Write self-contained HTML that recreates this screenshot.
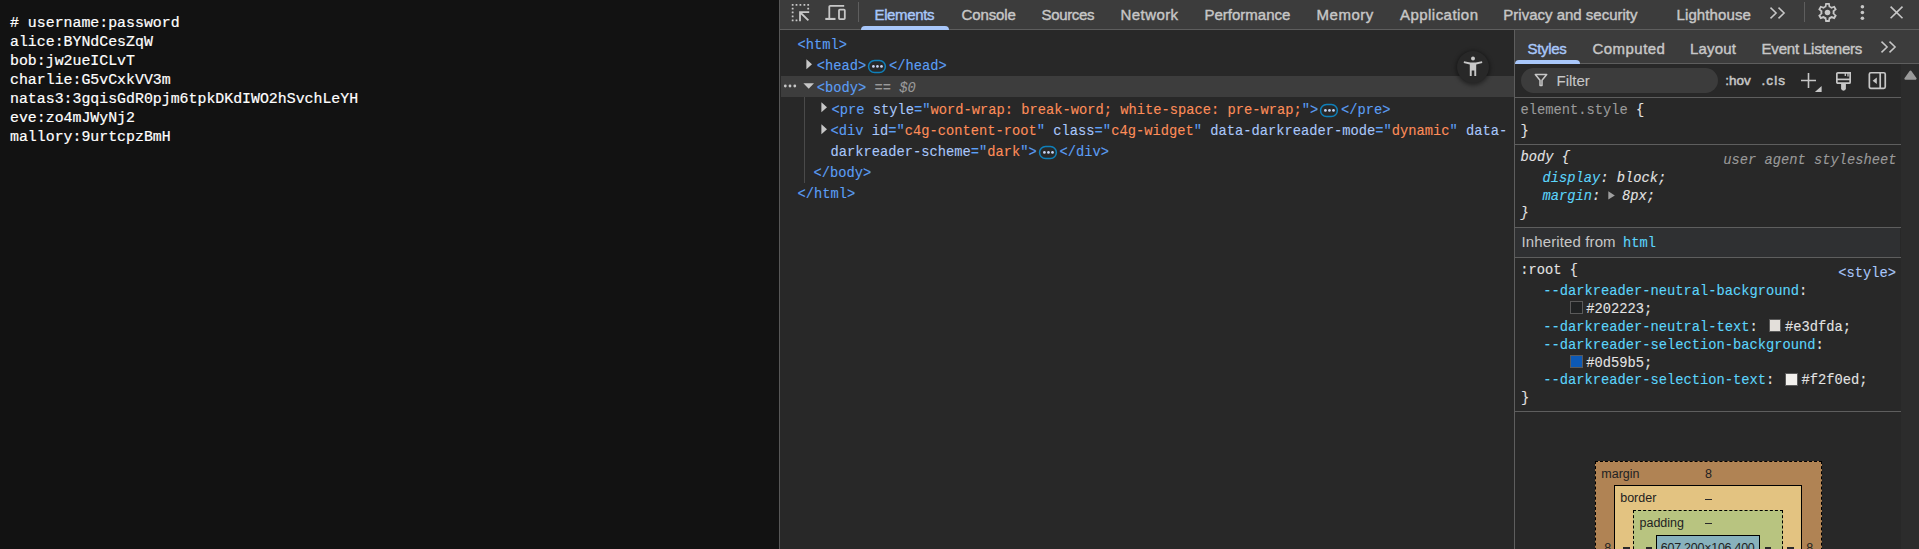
<!DOCTYPE html>
<html>
<head>
<meta charset="utf-8">
<title>users.txt</title>
<style>
html,body{margin:0;padding:0;}
body{width:1919px;height:549px;overflow:hidden;position:relative;background:#282828;font-family:"Liberation Sans",sans-serif;}
.abs{position:absolute;}
.t{position:absolute;white-space:pre;line-height:1;}
.mono{font-family:"Liberation Mono",monospace;}
/* left page */
#page{left:0;top:0;width:779px;height:549px;background:#121212;}
#page pre{position:absolute;left:10px;top:14px;-webkit-text-stroke:0.2px;margin:0;font-family:"Liberation Mono",monospace;font-size:14.896px;line-height:19px;color:#fff;white-space:pre;}
#split{left:779px;top:0;width:1px;height:549px;background:#575757;}
/* devtools */
#tb{left:780px;top:0;width:1139px;height:29px;background:#3c3c3c;}
#tbline{left:780px;top:29px;width:1139px;height:1px;background:#5e5e5e;}
.tab{position:absolute;top:5.5px;-webkit-text-stroke:0.4px;font-size:15px;line-height:17px;color:#c7c7c7;white-space:pre;}
.tab.sel{color:#a8c7fa;}
/* elements */
.dt{-webkit-text-stroke:0.1px;font-family:"Liberation Mono",monospace;font-size:13.75px;line-height:21.25px;white-space:pre;position:absolute;}
.tg{color:#5c9ff5;}.an{color:#a8c7fa;}.av{color:#fe8d59;}.gr{color:#9a9a9a;}
.cy{color:#5cd5fb;}.wh{color:#e3e3e3;}
.st{-webkit-text-stroke:0.1px;font-family:"Liberation Mono",monospace;font-size:13.75px;line-height:18px;white-space:pre;position:absolute;}
.hl{position:absolute;left:1515px;width:386px;height:1px;background:#5e5e5e;}

.pill{width:18.3px;height:13.4px;border:1.3px solid #0f7db5;border-radius:7px;box-sizing:border-box;}
.pill::after{content:"";position:absolute;left:3px;top:4.1px;width:2.6px;height:2.6px;border-radius:50%;background:#c3d3f3;box-shadow:4.05px 0 0 #c3d3f3,8.1px 0 0 #c3d3f3;}

.sw{width:12.6px;height:12.6px;box-sizing:border-box;border:1px solid #5a5a5a;}

.bm{position:absolute;font-size:12.5px;line-height:16px;color:#222;white-space:pre;}
.ds{position:absolute;width:6.500px;height:1.200px;background:#2a2a2a;}
</style>
</head>
<body>
<div id="page" class="abs"><pre># username:password
alice:BYNdCesZqW
bob:jw2ueICLvT
charlie:G5vCxkVV3m
natas3:3gqisGdR0pjm6tpkDKdIWO2hSvchLeYH
eve:zo4mJWyNj2
mallory:9urtcpzBmH</pre></div>
<div id="split" class="abs"></div>
<div id="tb" class="abs"></div>
<div id="tbline" class="abs"></div>

<!-- TOOLBAR -->
<svg class="abs" style="left:790px;top:2px" width="22" height="22" viewBox="0 0 22 22">
 <g fill="#c7c7c7"><rect x="1.75" y="1.95" width="1.8" height="1.8" rx="0.3"/><rect x="5.60" y="1.95" width="1.8" height="1.8" rx="0.3"/><rect x="9.50" y="1.95" width="1.8" height="1.8" rx="0.3"/><rect x="13.50" y="1.95" width="1.8" height="1.8" rx="0.3"/><rect x="17.30" y="1.95" width="1.8" height="1.8" rx="0.3"/><rect x="1.75" y="5.70" width="1.8" height="1.8" rx="0.3"/><rect x="1.75" y="9.50" width="1.8" height="1.8" rx="0.3"/><rect x="1.75" y="13.50" width="1.8" height="1.8" rx="0.3"/><rect x="1.75" y="17.40" width="1.8" height="1.8" rx="0.3"/><rect x="17.30" y="5.70" width="1.8" height="1.8" rx="0.3"/><rect x="5.60" y="17.40" width="1.8" height="1.8" rx="0.3"/></g>
 <path d="M10 19.200V10.200H19.200M10.300 10.500L18.400 18.300" fill="none" stroke="#c7c7c7" stroke-width="1.800"/>
</svg>
<svg class="abs" style="left:824px;top:3px" width="24" height="20" viewBox="0 0 24 20" fill="none" stroke="#c7c7c7" stroke-width="1.800">
 <path d="M5.300 14.900V3.900a1 1 0 0 1 1-1H20.200"/>
 <path d="M1.300 15.950H11.500" stroke-width="2.100"/>
 <rect x="15" y="6.600" width="5.800" height="9.500" rx="0.800"/>
</svg>
<div class="abs" style="left:858px;top:2px;width:1px;height:20px;background:#5e5e5e"></div>
<div class="abs" style="left:861px;top:26px;width:88px;height:4px;background:#a8c7fa;border-radius:4px 4px 0 0"></div>
<div class="tab sel" id="t1" style="letter-spacing:-0.36px;left:874.5px">Elements</div>
<div class="tab" id="t2" style="letter-spacing:-0.13px;left:961.5px">Console</div>
<div class="tab" id="t3" style="letter-spacing:-0.33px;left:1041.5px">Sources</div>
<div class="tab" id="t4" style="letter-spacing:0.43px;left:1120.5px">Network</div>
<div class="tab" id="t5" style="left:1204.5px">Performance</div>
<div class="tab" id="t6" style="letter-spacing:0.54px;left:1316.5px">Memory</div>
<div class="tab" id="t7" style="letter-spacing:0.46px;left:1400px">Application</div>
<div class="tab" id="t8" style="left:1503.3px">Privacy and security</div>
<div class="tab" id="t9" style="letter-spacing:0.11px;left:1676.5px">Lighthouse</div>
<svg class="abs" style="left:1768px;top:4.500px" width="20" height="16" viewBox="0 0 20 16" fill="none" stroke="#c7c7c7" stroke-width="1.5">
 <path d="M2.5 2.6l5.6 5.4l-5.6 5.4M10.5 2.6l5.6 5.4l-5.6 5.4"/>
</svg>
<div class="abs" style="left:1804px;top:2px;width:1px;height:20px;background:#5e5e5e"></div>
<svg class="abs" style="left:1816px;top:1px" width="23" height="23" viewBox="0 0 24 24" fill="#c7c7c7">
 <path fill-rule="evenodd" d="M9.7 2h4.6l.5 3.1c.6.25 1.15.57 1.65.96l2.95-1.12 2.3 3.98-2.45 1.98c.05.36.08.73.08 1.1s-.03.74-.08 1.1l2.45 1.98-2.3 3.98-2.95-1.12c-.5.39-1.05.71-1.65.96L14.300 22H9.700l-.5-3.100c-.6-.25-1.150-.570-1.650-.960l-2.950 1.120-2.300-3.980 2.450-1.980c-.050-.360-.080-.730-.080-1.100s.030-.740.080-1.100L2.300 8.920l2.300-3.980 2.950 1.120c.5-.39 1.050-.71 1.650-.96zM11.200 3.800l-.42 2.650-.5.180c-.7.260-1.330.63-1.890 1.100l-.4.340-2.520-.96-.8 1.390 2.090 1.690-.09.520c-.12.700-.12 1.500 0 2.200l.09.520-2.090 1.690.8 1.390 2.520-.96.400.340c.560.470 1.190.840 1.890 1.100l.5.180.42 2.650h1.600l.42-2.650.5-.18c.7-.26 1.330-.63 1.890-1.100l.4-.34 2.520.96.800-1.390-2.090-1.690.09-.52c.120-.7.120-1.500 0-2.200l-.09-.52 2.090-1.690-.8-1.390-2.520.96-.4-.34c-.56-.47-1.190-.84-1.890-1.100l-.5-.18-.42-2.650z"/>
 <circle cx="12" cy="12" r="2.9"/>
</svg>
<svg class="abs" style="left:1858px;top:3px" width="9" height="19" viewBox="0 0 9 19" fill="#c7c7c7">
 <circle cx="4.400" cy="3.700" r="1.800"/><circle cx="4.400" cy="9.450" r="1.800"/><circle cx="4.400" cy="15.200" r="1.800"/>
</svg>
<svg class="abs" style="left:1888px;top:4px" width="17" height="17" viewBox="0 0 17 17" fill="none" stroke="#c7c7c7" stroke-width="1.6">
 <path d="M2.600 2.600l11.900 11.700M14.500 2.600l-11.900 11.700"/>
</svg>

<!-- ELEMENTS -->
<div class="abs" style="left:781px;top:76px;width:733px;height:21px;background:#3d3d3d"></div>
<div class="abs" style="left:804px;top:97px;width:1px;height:86px;background:#4a4a4a"></div>
<div class="dt" style="left:797.5px;top:34.65px"><span class="tg">&lt;html&gt;</span></div>
<svg class="abs" style="left:805.5px;top:58.9px" width="7" height="11" viewBox="0 0 7 11"><path d="M0.400 0.200L6 5.200L0.400 10.200z" fill="#c7c7c7"/></svg>
<div class="dt" style="left:816.8px;top:55.65px"><span class="tg">&lt;head&gt;</span></div>
<svg class="abs" style="left:867px;top:59px" width="20" height="15" viewBox="0 0 20 15"><rect x="1.550" y="1.450" width="16.800" height="12" rx="6" fill="none" stroke="#0f80ba" stroke-width="1.500"/><g fill="#c5d5f5"><circle cx="6.400" cy="7.450" r="1.350"/><circle cx="10.450" cy="7.450" r="1.350"/><circle cx="14.500" cy="7.450" r="1.350"/></g></svg>
<div class="dt" style="left:889px;top:55.65px"><span class="tg">&lt;/head&gt;</span></div>
<svg class="abs" style="left:783px;top:83px" width="14" height="6" viewBox="0 0 14 6" fill="#c7c7c7"><circle cx="2.300" cy="3" r="1.400"/><circle cx="7" cy="3" r="1.400"/><circle cx="11.800" cy="3" r="1.400"/></svg>
<svg class="abs" style="left:803px;top:82.7px" width="12" height="7" viewBox="0 0 12 7"><path d="M0.400 0.200H11L5.700 5.800z" fill="#c7c7c7"/></svg>
<div class="dt" style="left:816.8px;top:77.65px"><span class="tg">&lt;body&gt;</span><span class="gr" style="font-style:italic"> == $0</span></div>
<svg class="abs" style="left:820.6px;top:102.1px" width="7" height="11" viewBox="0 0 7 11"><path d="M0.400 0.200L6 5.200L0.400 10.200z" fill="#c7c7c7"/></svg>
<div class="dt" style="left:831.5px;top:99.65px"><span class="tg">&lt;pre </span><span class="an">style</span><span class="tg">="</span><span class="av">word-wrap: break-word; white-space: pre-wrap;</span><span class="tg">"&gt;</span></div>
<svg class="abs" style="left:1319px;top:103px" width="20" height="15" viewBox="0 0 20 15"><rect x="1.550" y="1.450" width="16.800" height="12" rx="6" fill="none" stroke="#0f80ba" stroke-width="1.500"/><g fill="#c5d5f5"><circle cx="6.400" cy="7.450" r="1.350"/><circle cx="10.450" cy="7.450" r="1.350"/><circle cx="14.500" cy="7.450" r="1.350"/></g></svg>
<div class="dt" style="left:1341px;top:99.65px"><span class="tg">&lt;/pre&gt;</span></div>
<svg class="abs" style="left:820.6px;top:124px" width="7" height="11" viewBox="0 0 7 11"><path d="M0.400 0.200L6 5.200L0.400 10.200z" fill="#c7c7c7"/></svg>
<div class="dt" style="left:830.5px;top:120.65px"><span class="tg">&lt;div </span><span class="an">id</span><span class="tg">="</span><span class="av">c4g-content-root</span><span class="tg">" </span><span class="an">class</span><span class="tg">="</span><span class="av">c4g-widget</span><span class="tg">" </span><span class="an">data-darkreader-mode</span><span class="tg">="</span><span class="av">dynamic</span><span class="tg">" </span><span class="an">data-</span></div>
<div class="dt" style="left:830.5px;top:141.65px"><span class="an">darkreader-scheme</span><span class="tg">="</span><span class="av">dark</span><span class="tg">"&gt;</span></div>
<svg class="abs" style="left:1038.1px;top:145.1px" width="20" height="15" viewBox="0 0 20 15"><rect x="1.550" y="1.450" width="16.800" height="12" rx="6" fill="none" stroke="#0f80ba" stroke-width="1.500"/><g fill="#c5d5f5"><circle cx="6.400" cy="7.450" r="1.350"/><circle cx="10.450" cy="7.450" r="1.350"/><circle cx="14.500" cy="7.450" r="1.350"/></g></svg>
<div class="dt" style="left:1059.6px;top:141.65px"><span class="tg">&lt;/div&gt;</span></div>
<div class="dt" style="left:813.5px;top:162.65px"><span class="tg">&lt;/body&gt;</span></div>
<div class="dt" style="left:797.5px;top:183.65px"><span class="tg">&lt;/html&gt;</span></div>
<!-- a11y button -->
<div class="abs" style="left:1456.5px;top:50.5px;width:32px;height:32px;border-radius:50%;background:#282828;box-shadow:0 1px 4px 1px rgba(0,0,0,.45)"></div>
<svg class="abs" style="left:1462px;top:55px" width="22" height="22" viewBox="0 0 22 22" fill="#c7c7c7">
 <circle cx="11" cy="3.600" r="2"/>
 <path d="M2 6.300L8.300 7.500H13.700L20 6.300L20.300 8L14.200 9.500V21H12.300V15.500H9.700V21H7.800V9.500L1.700 8z"/>
</svg>

<!-- STYLES PANE -->
<div class="abs" style="left:1514px;top:30px;width:1px;height:519px;background:#5e5e5e"></div>
<div class="abs" style="left:1515px;top:30px;width:404px;height:33px;background:#3c3c3c"></div>
<div class="abs" style="left:1515px;top:63px;width:404px;height:1px;background:#5e5e5e"></div>
<div class="abs" style="left:1515px;top:60px;width:65px;height:4px;background:#a8c7fa;border-radius:4px 4px 0 0"></div>
<div class="tab sel" id="s1" style="letter-spacing:-0.3px;left:1527.5px;top:40px">Styles</div>
<div class="tab" id="s2" style="letter-spacing:0.46px;left:1592.5px;top:40px">Computed</div>
<div class="tab" id="s3" style="letter-spacing:0.18px;left:1690px;top:40px">Layout</div>
<div class="tab" id="s4" style="letter-spacing:-0.18px;left:1761.5px;top:40px">Event Listeners</div>
<svg class="abs" style="left:1879px;top:39px" width="20" height="16" viewBox="0 0 20 16" fill="none" stroke="#c7c7c7" stroke-width="1.5">
 <path d="M2.5 2.6l5.600 5.400l-5.600 5.400M10.500 2.600l5.600 5.400l-5.600 5.400"/>
</svg>
<!-- filter row -->
<div class="abs" style="left:1521px;top:68px;width:197px;height:25px;border-radius:12.5px;background:#3c3c3c"></div>
<svg class="abs" style="left:1533px;top:72px" width="16" height="16" viewBox="0 0 16 16" fill="none" stroke="#c7c7c7" stroke-width="1.500">
 <path d="M2.300 2.500H13.700L9 8.300V13.500H7V8.300z" stroke-linejoin="round"/>
</svg>
<div class="tab" id="f1" style="left:1556.5px;top:72px;color:#c7c7c7;-webkit-text-stroke:0.1px">Filter</div>
<div class="tab" id="f2" style="left:1725.2px;top:72px;font-size:13.5px;-webkit-text-stroke:0.5px">:hov</div>
<div class="tab" id="f3" style="letter-spacing:1.1px;left:1761.5px;top:72px;font-size:13.5px;-webkit-text-stroke:0.5px">.cls</div>
<svg class="abs" style="left:1799px;top:70px" width="24" height="24" viewBox="0 0 24 24" fill="none" stroke="#c7c7c7" stroke-width="1.600">
 <path d="M2 10.500H17M9.500 3V18"/>
 <path d="M22.600 16V22H15.900z" fill="#c7c7c7" stroke="none"/>
</svg>
<svg class="abs" style="left:1834px;top:70px" width="20" height="22" viewBox="0 0 20 22" fill="none" stroke="#c7c7c7" stroke-width="1.700">
 <path d="M2.850 3.800a1 1 0 0 1 1-1H16.150V12.200a1 1 0 0 1-1 1H3.850a1 1 0 0 1-1-1z"/>
 <path d="M2.850 9.400H16.150"/>
 <path d="M11.300 2.800V6M14 2.800V6.600" stroke-width="1.300"/>
 <path d="M7.100 13.200H11.900V18.300a2.400 2.400 0 0 1-4.800 0z" fill="#c7c7c7" stroke="none"/>
</svg>
<svg class="abs" style="left:1867px;top:70px" width="21" height="21" viewBox="0 0 21 21" fill="none" stroke="#c7c7c7" stroke-width="1.700">
 <rect x="2.350" y="2.750" width="15.900" height="15.600" rx="1.500"/>
 <path d="M13.200 2.750V18.350"/>
 <path d="M9.800 7.600L5.600 10.800L9.800 14z" fill="#c7c7c7" stroke="none"/>
</svg>
<div class="hl" style="top:97px"></div>
<!-- scrollbar -->
<div class="abs" style="left:1901px;top:64px;width:18px;height:485px;background:#2c2c2c"></div>
<svg class="abs" style="left:1903px;top:69px" width="16" height="12" viewBox="0 0 16 12"><path d="M2.500 9.700L7.500 2.700L12.500 9.700z" fill="#9a9a9a" stroke="#9a9a9a" stroke-width="2.200" stroke-linejoin="round"/></svg>
<!-- rules -->
<div class="st" style="left:1520.5px;top:101.7px"><span class="gr">element.style</span><span class="wh"> {</span></div>
<div class="st" style="left:1520.5px;top:122.7px"><span class="wh">}</span></div>
<div class="hl" style="top:144px"></div>
<div class="st" style="left:1520.5px;top:148.7px;font-style:italic"><span class="wh">body {</span></div>
<div class="st" id="uas" style="right:22.5px;top:151.7px;font-style:italic"><span class="gr">user agent stylesheet</span></div>
<div class="st" style="left:1542.5px;top:169.7px;font-style:italic"><span class="cy">display</span><span class="wh">: block;</span></div>
<div class="st" style="left:1542.5px;top:187.5px;font-style:italic"><span class="cy">margin</span><span class="wh">:</span></div>
<svg class="abs" style="left:1608px;top:191px" width="8" height="9" viewBox="0 0 8 9"><path d="M0.300 0.200L6.800 4.400L0.300 8.600z" fill="#9f9f9f"/></svg>
<div class="st" style="left:1622px;top:187.5px;font-style:italic"><span class="wh">8px;</span></div>
<div class="st" style="left:1520.5px;top:205.2px;font-style:italic"><span class="wh">}</span></div>
<div class="hl" style="top:227px"></div>
<div class="abs" style="left:1515px;top:228px;width:385px;height:29px;background:#2f3032"></div>
<div class="tab" id="inh" style="left:1521.5px;top:232.6px;color:#c7c7c7;-webkit-text-stroke:0;letter-spacing:0.12px">Inherited from</div>
<div class="st" style="left:1623px;top:234.7px"><span class="cy">html</span></div>
<div class="hl" style="top:257px"></div>
<div class="st" style="left:1520.3px;top:262.0px"><span class="wh">:root {</span></div>
<div class="st" style="right:23px;top:264.7px"><span style="color:#a8c7fa">&lt;style&gt;</span></div>
<div class="st" style="left:1543.2px;top:282.7px"><span class="cy">--darkreader-neutral-background</span><span class="wh">:</span></div>
<div class="abs sw" style="left:1570.2px;top:301.3px;background:#202223"></div>
<div class="st" style="left:1586.3px;top:300.7px"><span class="wh">#202223;</span></div>
<div class="st" style="left:1543.2px;top:318.7px"><span class="cy">--darkreader-neutral-text</span><span class="wh">:</span></div>
<div class="abs sw" style="left:1768.5px;top:319.3px;background:#e3dfda"></div>
<div class="st" style="left:1785px;top:318.7px"><span class="wh">#e3dfda;</span></div>
<div class="st" style="left:1543.2px;top:336.6px"><span class="cy">--darkreader-selection-background</span><span class="wh">:</span></div>
<div class="abs sw" style="left:1570.2px;top:355.2px;background:#0d59b5"></div>
<div class="st" style="left:1586.3px;top:354.5px"><span class="wh">#0d59b5;</span></div>
<div class="st" style="left:1543.2px;top:372.4px"><span class="cy">--darkreader-selection-text</span><span class="wh">:</span></div>
<div class="abs sw" style="left:1785px;top:373px;background:#f2f0ed"></div>
<div class="st" style="left:1801.5px;top:372.4px"><span class="wh">#f2f0ed;</span></div>
<div class="st" style="left:1521px;top:390.2px"><span class="wh">}</span></div>
<div class="hl" style="top:411px"></div>

<!-- BOX MODEL -->
<div class="abs" style="left:1595px;top:461px;width:226.500px;height:100px;background:#b08354;border:1px dashed #000;box-sizing:border-box"></div>
<div class="abs" style="left:1614px;top:485px;width:187.500px;height:80px;background:#e3c381;border:1px solid #000;box-sizing:border-box"></div>
<div class="abs" style="left:1633px;top:510px;width:150px;height:60px;background:#b8c480;border:1px dashed #000;box-sizing:border-box"></div>
<div class="abs" style="left:1656px;top:534.500px;width:104px;height:40px;background:#88b2bd;border:1px solid #000;box-sizing:border-box"></div>
<div class="bm" id="b1" style="left:1601.300px;top:465.600px">margin</div>
<div class="bm" id="b2" style="left:1705px;top:465.600px">8</div>
<div class="bm" id="b3" style="left:1620.200px;top:490.400px">border</div>
<div class="ds" style="left:1705.200px;top:499px"></div>
<div class="bm" id="b5" style="left:1639.500px;top:514.800px">padding</div>
<div class="ds" style="left:1705.200px;top:523px"></div>
<div class="bm" id="b7" style="left:1660.800px;top:539.600px;letter-spacing:-0.26px">607.200&times;106.400</div>
<div class="bm" id="b8" style="left:1604.300px;top:539.600px">8</div>
<div class="bm" id="b9" style="left:1806.300px;top:539.600px">8</div>
<div class="ds" style="left:1623.200px;top:547.200px;height:1.500px"></div>
<div class="ds" style="left:1645.600px;top:547.200px;height:1.500px"></div>
<div class="ds" style="left:1764.500px;top:547.200px;height:1.500px"></div>
<div class="ds" style="left:1787px;top:547.200px;height:1.500px"></div>
</body>
</html>
